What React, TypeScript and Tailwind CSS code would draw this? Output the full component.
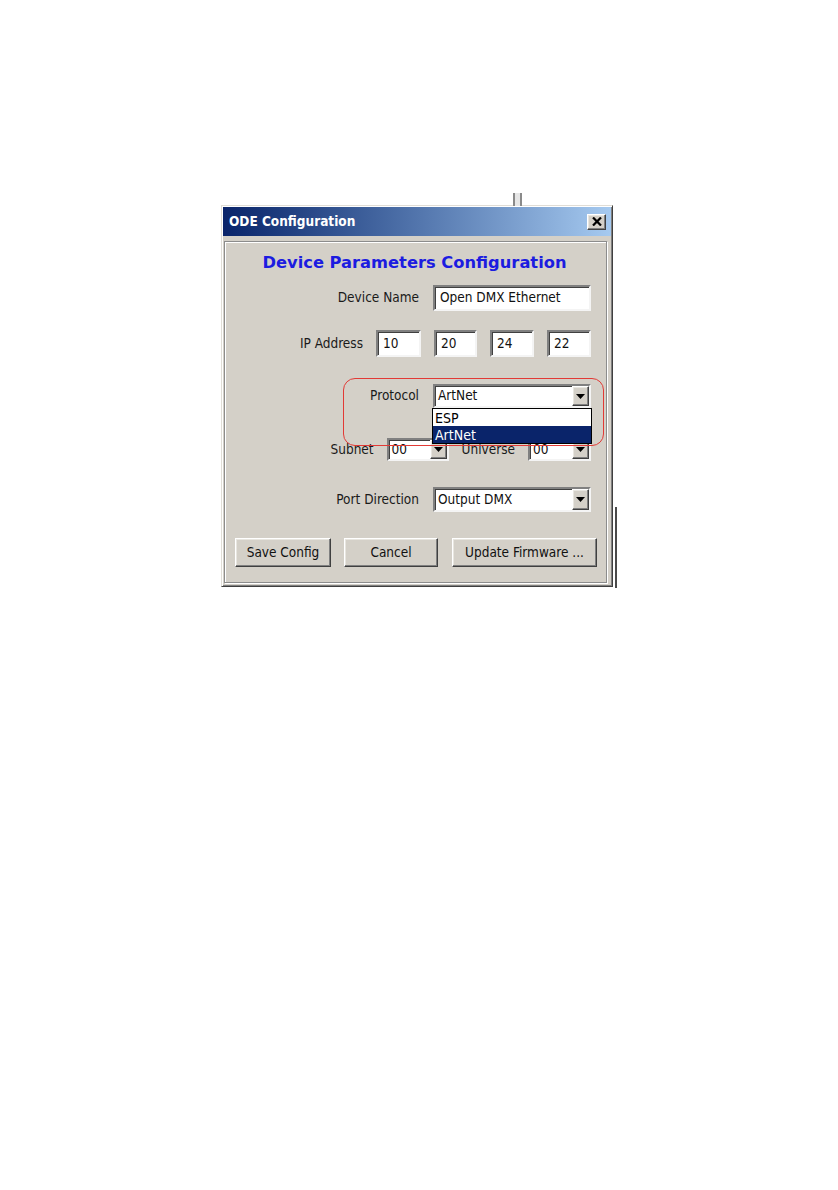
import React from "react";

const raised =
  "border border-t-white border-l-white border-b-[#404040] border-r-[#404040] shadow-[inset_-1px_-1px_0_#808080,inset_1px_1px_0_#e8e6e0] bg-[#d4d0c8]";
const sunken =
  "border-2 border-t-[#808080] border-l-[#808080] border-b-[#f4f4f4] border-r-[#f4f4f4] shadow-[inset_1px_1px_0_#404040] bg-white";

function Arrow() {
  return (
    <svg width="9" height="5" viewBox="0 0 9 5">
      <polygon points="0,0 9,0 4.5,5" fill="#000" />
    </svg>
  );
}

function Combo({ value, className }: { value: string; className: string }) {
  return (
    <div className={`${sunken} ${className} flex items-stretch`}>
      <div className="flex-1 flex items-center pl-[3px] text-[13.5px] text-[#111] leading-none overflow-hidden whitespace-nowrap">
        {value}
      </div>
      <div className={`${raised} w-[17px] flex items-center justify-center`}>
        <Arrow />
      </div>
    </div>
  );
}

function Field({ value, className }: { value: string; className: string }) {
  return (
    <div className={`${sunken} ${className} flex items-center pl-[5px] text-[13.5px] text-[#111] leading-none whitespace-nowrap`}>
      {value}
    </div>
  );
}

function Label({ children }: { children: React.ReactNode }) {
  return <span className="text-[13.5px] text-[#1a1a1a] leading-none whitespace-nowrap">{children}</span>;
}

export default function App() {
  return (
    <div className="w-[838px] h-[1190px] bg-white relative font-['DejaVu_Sans_Condensed','Liberation_Sans',sans-serif]">
      {/* desktop fragments behind the window */}
      <div className="absolute left-[513px] top-[193px] w-[9px] h-[13px] border-x-2 border-[#8a8a8a] bg-[#e6e6e6]" />
      <div className="absolute left-[615px] top-[507px] w-[2px] h-[81px] bg-[#4a4a4a]" />

      <div className="pt-[205px] pl-[221px]">
        <div className="w-[392px] h-[382px] bg-[#d4d0c8] border border-t-[#e0ddd6] border-l-[#e0ddd6] border-b-[#404040] border-r-[#404040] shadow-[inset_1px_1px_0_#ffffff,inset_-1px_-1px_0_#808080] p-[1px] flex flex-col">
          {/* title bar */}
          <div className="h-[29px] flex items-center bg-gradient-to-r from-[#0a246a] to-[#a6caf0]">
            <span className="pl-[6px] pt-[1px] text-white font-bold text-[13.5px] leading-none">ODE Configuration</span>
            <div className={`${raised} ml-auto mr-[5px] w-[19px] h-[16px] flex items-center justify-center`}>
              <svg width="10" height="9" viewBox="0 0 10 9">
                <path d="M1 0.5 L9 8.5 M9 0.5 L1 8.5" stroke="#000" strokeWidth="2.2" />
              </svg>
            </div>
          </div>

          {/* panel */}
          <div className="relative mt-[5px] ml-[1px] mr-[4px] mb-[2px] flex-1 border border-[#8c8c8c] shadow-[1px_1px_0_#ffffff,inset_1px_1px_0_#ffffff] flex flex-col">
            <div className="mt-[11px] h-[20px] flex items-center justify-center pr-[2px] font-['DejaVu_Sans',sans-serif] font-bold text-[16.3px] text-[#1c1ce0] leading-none whitespace-nowrap">
              Device Parameters Configuration
            </div>

            {/* Device Name */}
            <div className="mt-[12px] flex items-center justify-end pr-[15px] gap-[14px]">
              <Label>Device Name</Label>
              <Field value="Open DMX Ethernet" className="w-[158px] h-[26px]" />
            </div>

            {/* IP Address */}
            <div className="mt-[19px] flex items-center justify-end pr-[15px] gap-[13px]">
              <Label>IP Address</Label>
              <Field value="10" className="w-[45px] h-[27px]" />
              <Field value="20" className="w-[43px] h-[27px]" />
              <Field value="24" className="w-[44px] h-[27px]" />
              <Field value="22" className="w-[44px] h-[27px]" />
            </div>

            {/* Protocol */}
            <div className="mt-[27px] flex items-center justify-end pr-[15px] gap-[14px]">
              <Label>Protocol</Label>
              <div className="relative">
                <Combo value="ArtNet" className="w-[158px] h-[24px]" />
                <div className="absolute z-10 left-[-1px] top-full w-[160px] border border-black bg-white text-[14px] leading-none">
                  <div className="h-[17px] flex items-center pl-[2px] text-black">ESP</div>
                  <div className="h-[17px] flex items-center pl-[2px] bg-[#0a246a] text-white">ArtNet</div>
                </div>
              </div>
            </div>

            {/* Subnet / Universe */}
            <div className="mt-[30px] flex items-center justify-end pr-[15px] gap-[13px]">
              <Label>Subnet</Label>
              <Combo value="00" className="w-[62px] h-[23px]" />
              <Label>Universe</Label>
              <Combo value="00" className="w-[63px] h-[23px]" />
            </div>

            {/* Port Direction */}
            <div className="mt-[26px] flex items-center justify-end pr-[15px] gap-[14px]">
              <Label>Port Direction</Label>
              <Combo value="Output DMX" className="w-[158px] h-[25px]" />
            </div>

            {/* Buttons */}
            <div className="mt-[26px] flex items-center pl-[10px]">
              <div className={`${raised} w-[96px] h-[29px] flex items-center justify-center text-[13.5px] text-[#111]`}>Save Config</div>
              <div className={`${raised} ml-[13px] w-[94px] h-[29px] flex items-center justify-center text-[13.5px] text-[#111]`}>Cancel</div>
              <div className={`${raised} ml-[14px] w-[145px] h-[29px] flex items-center justify-center text-[13.5px] text-[#111]`}>Update Firmware ...</div>
            </div>

            {/* red highlight */}
            <div className="absolute z-20 left-[118px] top-[136px] w-[261px] h-[68px] rounded-[12px] border border-[#e23a36] pointer-events-none" />
          </div>
        </div>
      </div>
    </div>
  );
}
